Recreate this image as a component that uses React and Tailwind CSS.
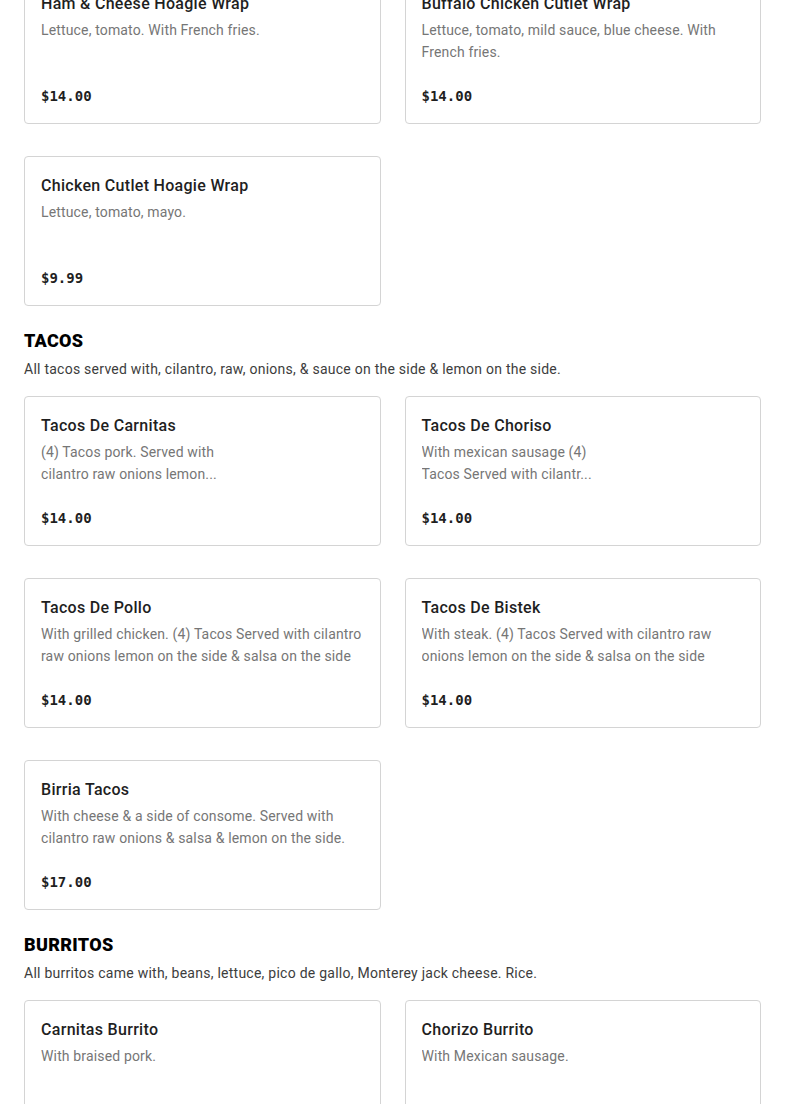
const sections = [
  {
    title: null,
    items: [
      { name: "Ham & Cheese Hoagie Wrap", desc: "Lettuce, tomato. With French fries.", price: "$14.00" },
      { name: "Buffalo Chicken Cutlet Wrap", desc: "Lettuce, tomato, mild sauce, blue cheese. With French fries.", price: "$14.00" },
      { name: "Chicken Cutlet Hoagie Wrap", desc: "Lettuce, tomato, mayo.", price: "$9.99" },
    ],
  },
  {
    title: "TACOS",
    note: "All tacos served with, cilantro, raw, onions, & sauce on the side & lemon on the side.",
    items: [
      { name: "Tacos De Carnitas", desc: "(4) Tacos pork. Served with\ncilantro raw onions lemon...", price: "$14.00" },
      { name: "Tacos De Choriso", desc: "With mexican sausage (4)\nTacos Served with cilantr...", price: "$14.00" },
      { name: "Tacos De Pollo", desc: "With grilled chicken. (4) Tacos Served with cilantro raw onions lemon on the side & salsa on the side", price: "$14.00" },
      { name: "Tacos De Bistek", desc: "With steak. (4) Tacos Served with cilantro raw onions lemon on the side & salsa on the side", price: "$14.00" },
      { name: "Birria Tacos", desc: "With cheese & a side of consome. Served with cilantro raw onions & salsa & lemon on the side.", price: "$17.00" },
    ],
  },
  {
    title: "BURRITOS",
    note: "All burritos came with, beans, lettuce, pico de gallo, Monterey jack cheese. Rice.",
    items: [
      { name: "Carnitas Burrito", desc: "With braised pork.", price: "$14.00" },
      { name: "Chorizo Burrito", desc: "With Mexican sausage.", price: "$14.00" },
    ],
  },
];

const ItemCard = ({ item }) => (
  <div className="flex h-[150px] flex-col rounded-[4px] border border-[#d4d4d4] bg-white px-4 pt-4 pb-[17px]">
    <h3 className="pt-px text-[16px] leading-6 font-medium tracking-[0.3px] text-[#1f1f1f]">{item.name}</h3>
    <p className="mt-[3px] line-clamp-2 text-[14px] leading-[22px] tracking-[0.15px] whitespace-pre-line text-[#767676]">
      {item.desc}
    </p>
    <div className="mt-auto font-['DejaVu_Sans_Mono',monospace] text-[14px] leading-5 font-bold text-[#1f1f1f]">
      {item.price}
    </div>
  </div>
);

export default function App() {
  return (
    <div className="min-h-screen overflow-hidden bg-white font-['Roboto','Liberation_Sans',sans-serif]">
      <div className="-mt-[26px] px-6">
        {sections.map((s, i) => (
          <section key={i} className={s.title ? "mt-[21px]" : ""}>
            {s.title && (
              <div className="mb-4">
                <h2 className="text-[18px] leading-7 font-black tracking-[0.3px] text-black">{s.title}</h2>
                <p className="mt-[3px] text-[14px] leading-[22px] tracking-[0.25px] text-[#3d3d3d]">{s.note}</p>
              </div>
            )}
            <div className="grid grid-cols-2 gap-x-6 gap-y-8">
              {s.items.map((item) => (
                <ItemCard key={item.name} item={item} />
              ))}
            </div>
          </section>
        ))}
      </div>
    </div>
  );
}
